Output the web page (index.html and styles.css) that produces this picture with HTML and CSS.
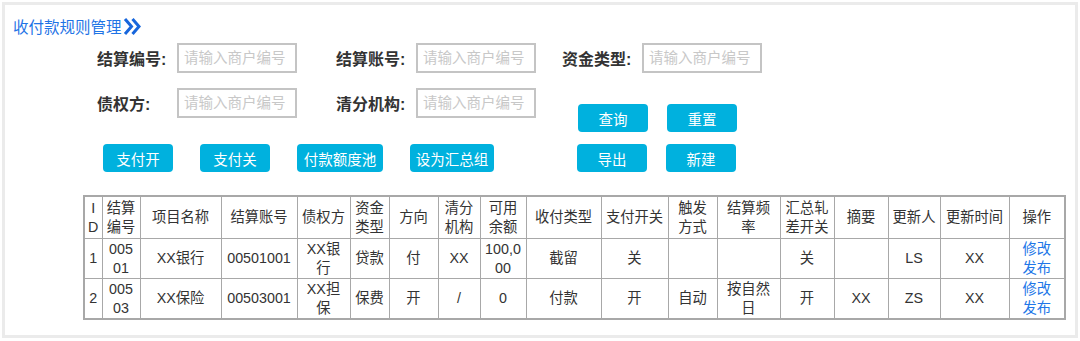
FILE: index.html
```html
<!DOCTYPE html>
<html lang="zh-CN">

<head>
    <meta charset="UTF-8">
    <meta name="viewport" content="width=device-width, initial-scale=1.0">
    <title>收付款规则管理</title>
    <link rel="stylesheet" href="styles.css">
</head>

<body>

    <div class="frame">
        <div class="title">
            <span>收付款规则管理</span>
            <svg class="chev" width="19" height="19" viewBox="0 0 19 19">
                <polyline points="2,2 8.5,9.5 2,17" fill="none" stroke="#1766dc" stroke-width="3" />
                <polyline points="9.5,2 16,9.5 9.5,17" fill="none" stroke="#1766dc" stroke-width="3" />
            </svg>
        </div>

        <!-- 查询条件 -->
        <div class="row row1">
            <div class="field">
                <label>结算编号:</label>
                <input type="text" placeholder="请输入商户编号">
            </div>
            <div class="field f2">
                <label>结算账号:</label>
                <input type="text" placeholder="请输入商户编号">
            </div>
            <div class="field f3">
                <label>资金类型:</label>
                <input type="text" placeholder="请输入商户编号">
            </div>
        </div>

        <div class="row row2">
            <div class="field">
                <label>债权方:</label>
                <input type="text" placeholder="请输入商户编号">
            </div>
            <div class="field f2">
                <label>清分机构:</label>
                <input type="text" placeholder="请输入商户编号">
            </div>
            <div class="btns right">
                <button class="btn">查询</button>
                <button class="btn">重置</button>
            </div>
        </div>

        <div class="row row3">
            <div class="btns left">
                <button class="btn">支付开</button>
                <button class="btn">支付关</button>
                <button class="btn wide">付款额度池</button>
                <button class="btn wide2">设为汇总组</button>
            </div>
            <div class="btns right">
                <button class="btn">导出</button>
                <button class="btn">新建</button>
            </div>
        </div>

        <!-- 列表 -->
        <table class="list">
            <colgroup>
                <col style="width:18px">
                <col style="width:38px">
                <col style="width:81px">
                <col style="width:76px">
                <col style="width:53px">
                <col style="width:39px">
                <col style="width:49px">
                <col style="width:42px">
                <col style="width:46px">
                <col style="width:75px">
                <col style="width:67px">
                <col style="width:49px">
                <col style="width:63px">
                <col style="width:54px">
                <col style="width:54px">
                <col style="width:52px">
                <col style="width:69px">
                <col style="width:56px">
            </colgroup>
            <tr class="head">
                <th>ID</th>
                <th>结算编号</th>
                <th>项目名称</th>
                <th>结算账号</th>
                <th>债权方</th>
                <th>资金类型</th>
                <th>方向</th>
                <th>清分机构</th>
                <th>可用余额</th>
                <th>收付类型</th>
                <th>支付开关</th>
                <th>触发方式</th>
                <th>结算频率</th>
                <th>汇总轧差开关</th>
                <th>摘要</th>
                <th>更新人</th>
                <th>更新时间</th>
                <th>操作</th>
            </tr>
            <tr>
                <td>1</td>
                <td>00501</td>
                <td>XX银行</td>
                <td>00501001</td>
                <td>XX银行</td>
                <td>贷款</td>
                <td>付</td>
                <td>XX</td>
                <td>100,000</td>
                <td>截留</td>
                <td>关</td>
                <td></td>
                <td></td>
                <td>关</td>
                <td></td>
                <td>LS</td>
                <td>XX</td>
                <td><a href="#">修改</a><a href="#">发布</a></td>
            </tr>
            <tr>
                <td>2</td>
                <td>00503</td>
                <td>XX保险</td>
                <td>00503001</td>
                <td>XX担保</td>
                <td>保费</td>
                <td>开</td>
                <td>/</td>
                <td>0</td>
                <td>付款</td>
                <td>开</td>
                <td>自动</td>
                <td>按自然日</td>
                <td>开</td>
                <td>XX</td>
                <td>ZS</td>
                <td>XX</td>
                <td><a href="#">修改</a><a href="#">发布</a></td>
            </tr>
        </table>
    </div>

</body>

</html>
```

FILE: styles.css
```css
body {
    margin: 0;
    font-family: "Liberation Sans", "Noto Sans CJK SC", sans-serif;
    color: #333;
    background: #fff;
}

.frame {
    box-sizing: border-box;
    width: 1076px;
    height: 336px;
    margin: 2px;
    border: 3px solid #ebebeb;
}

/* 标题 */
.title {
    display: flex;
    align-items: center;
    padding: 10px 0 0 8px;
    height: 22px;
    font-size: 15.5px;
    color: #1f74e6;
}

.title .chev {
    margin-left: 1px;
}

.row {
    display: flex;
    align-items: flex-start;
}

.row1 {
    margin-top: 6px;
    padding-left: 92px;
}

.row2 {
    margin-top: 15px;
    padding-left: 92px;
}

.row3 {
    margin-top: 12px;
    padding-left: 98px;
}

.field {
    display: flex;
    align-items: center;
}

.field label {
    width: 80px;
    font-size: 16px;
    font-weight: bold;
    color: #333;
}

.field input {
    box-sizing: border-box;
    width: 120px;
    height: 30px;
    border: 2px solid #c4c4c4;
    padding: 0 0 0 5px;
    font-family: "Liberation Sans", "Noto Sans CJK SC", sans-serif;
    font-size: 14.5px;
    outline: none;
}

.field input::placeholder {
    color: #c8c8c8;
}

.f2 {
    margin-left: 39px;
}

.f3 {
    margin-left: 26px;
}

.btns {
    display: flex;
}

.left {
    gap: 27px;
}

.right {
    gap: 19px;
}

.row2 .right {
    margin-left: 42px;
    margin-top: 16px;
}

.row3 .right {
    margin-left: 83px;
}

.btn {
    width: 70px;
    height: 28px;
    padding: 0;
    border: none;
    border-radius: 4px;
    background-color: #00b1de;
    color: #fff;
    font-family: "Liberation Sans", "Noto Sans CJK SC", sans-serif;
    font-size: 14.5px;
}

.btn.wide {
    width: 86px;
}

.btn.wide2 {
    width: 84px;
}

/* 表格 */
.list {
    margin: 23px 0 0 78px;
    width: 981px;
    table-layout: fixed;
    border-collapse: collapse;
    border: 2px solid #a8a8a8;
    font-size: 14.3px;
}

.list th,
.list td {
    border: 1px solid #a8a8a8;
    padding: 0 4px;
    text-align: center;
    line-height: 19px;
    font-weight: normal;
    word-break: break-all;
    color: #333;
}

.list th:first-child,
.list td:first-child {
    padding: 0 3px;
}

.list .head th {
    height: 41px;
}

.list td {
    height: 39px;
}

.list td a {
    display: block;
    color: #2176e8;
    text-decoration: none;
}
```
